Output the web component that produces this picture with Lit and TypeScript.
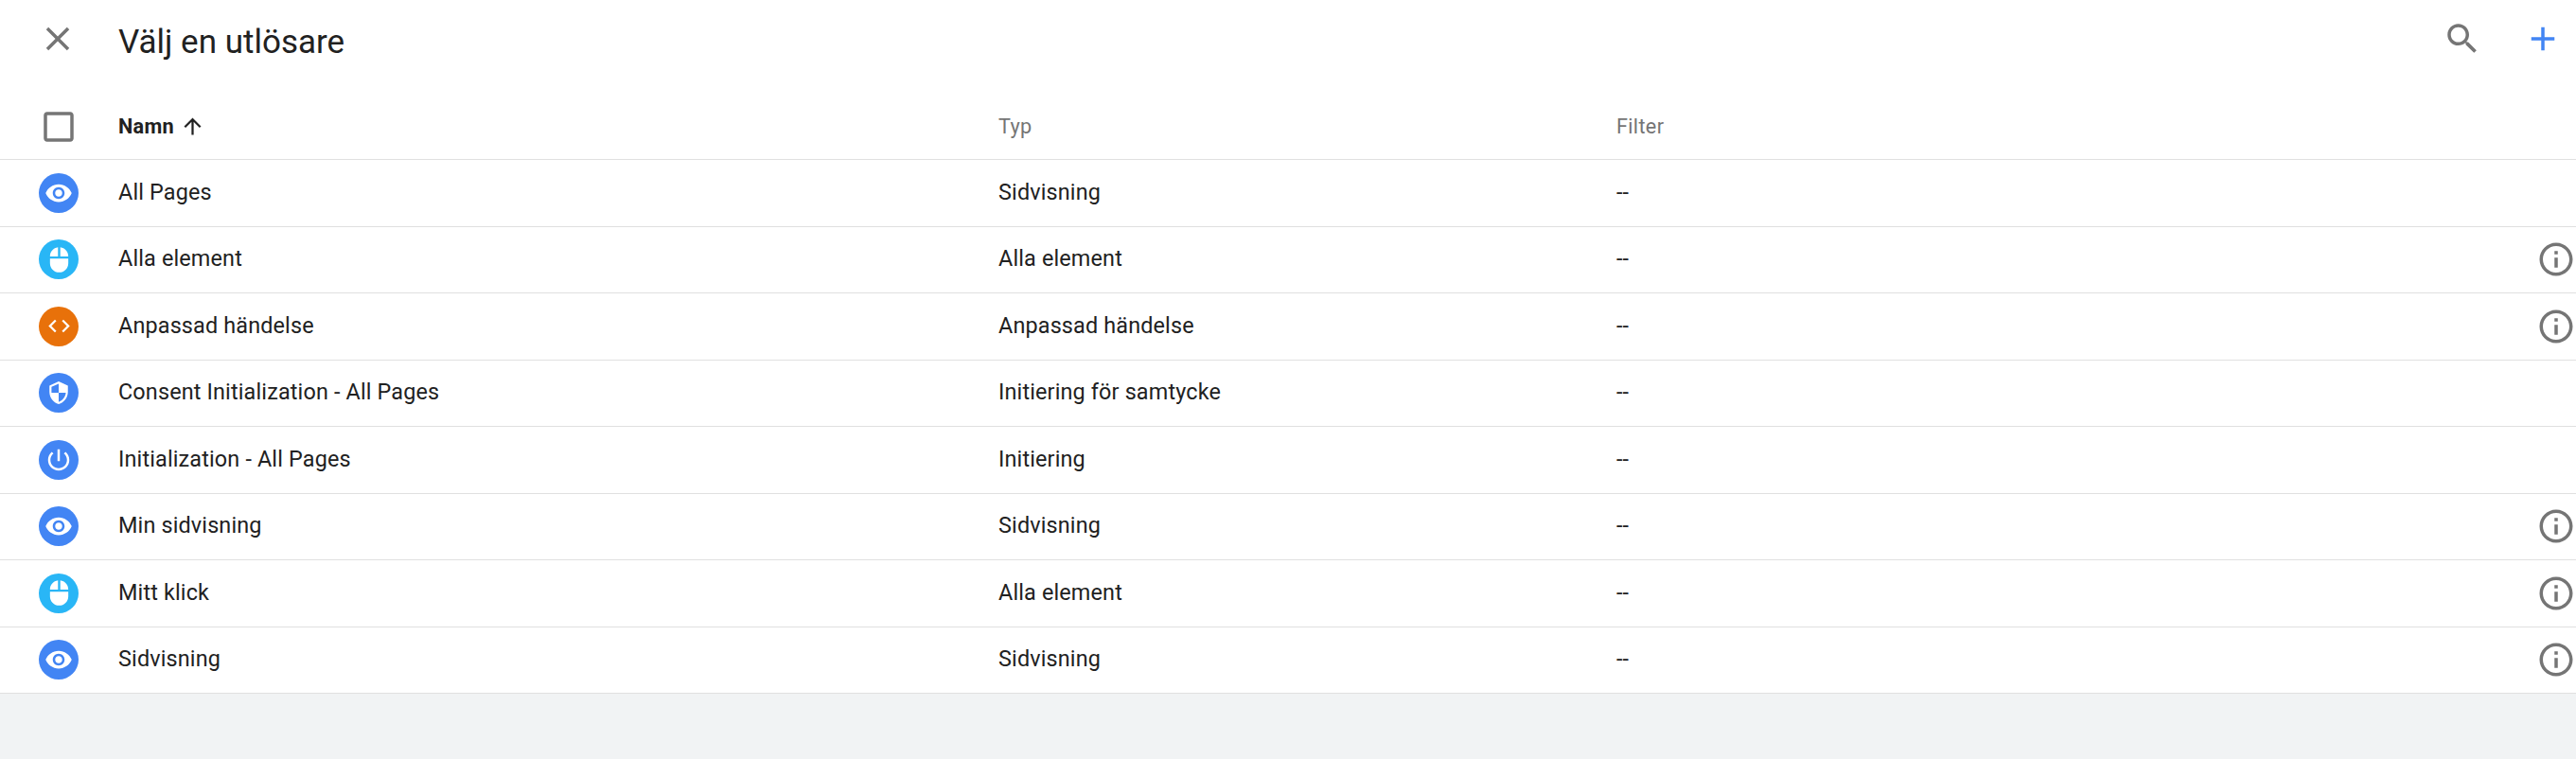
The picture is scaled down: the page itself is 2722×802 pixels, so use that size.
import { LitElement, html, css, svg } from "lit";
import { customElement } from "lit/decorators.js";

const P = {
  close: "M19 6.41L17.59 5 12 10.59 6.41 5 5 6.41 10.59 12 5 17.59 6.41 19 12 13.41 17.59 19 19 17.59 13.41 12z",
  search: "M15.5 14h-.79l-.28-.27C15.41 12.59 16 11.11 16 9.5 16 5.91 13.09 3 9.5 3S3 5.91 3 9.5 5.91 16 9.5 16c1.61 0 3.09-.59 4.23-1.57l.27.28v.79l5 4.99L20.49 19l-4.99-5zm-6 0C7.01 14 5 11.99 5 9.5S7.01 5 9.5 5 14 7.01 14 9.5 11.99 14 9.5 14z",
  plus: "M19 13h-6v6h-2v-6H5v-2h6V5h2v6h6v2z",
  box: "M19 5v14H5V5h14m0-2H5c-1.1 0-2 .9-2 2v14c0 1.1.9 2 2 2h14c1.1 0 2-.9 2-2V5c0-1.1-.9-2-2-2z",
  arrow: "M4 12l1.41 1.41L11 7.83V20h2V7.83l5.58 5.59L20 12l-8-8-8 8z",
  info: "M11 7h2v2h-2zm0 4h2v6h-2zm1-9C6.48 2 2 6.48 2 12s4.48 10 10 10 10-4.48 10-10S17.52 2 12 2zm0 18c-4.41 0-8-3.59-8-8s3.59-8 8-8 8 3.59 8 8-3.59 8-8 8z",
  eye: "M12 4.5C7 4.5 2.73 7.61 1 12c1.73 4.39 6 7.5 11 7.5s9.27-3.11 11-7.5c-1.73-4.39-6-7.5-11-7.5zM12 17c-2.76 0-5-2.24-5-5s2.24-5 5-5 5 2.24 5 5-2.24 5-5 5zm0-8c-1.66 0-3 1.34-3 3s1.34 3 3 3 3-1.34 3-3-1.34-3-3-3z",
  mouse: "M13 1.07V9h7c0-4.08-3.05-7.44-7-7.93zM4 15c0 4.42 3.58 8 8 8s8-3.58 8-8v-4H4v4zm7-13.93C7.05 1.56 4 4.92 4 9h7V1.07z",
  code: "M9.4 16.6L4.8 12l4.6-4.6L8 6l-6 6 6 6 1.4-1.4zm5.2 0l4.6-4.6-4.6-4.6L16 6l6 6-6 6-1.4-1.4z",
  shield: "M12 1L3 5v6c0 5.55 3.84 10.74 9 12 5.16-1.26 9-6.45 9-12V5l-9-4zm0 10.99h7c-.53 4.12-3.28 7.79-7 8.94V12H5V6.3l7-3.11v8.8z",
  power: "M13 3h-2v10h2V3zm4.83 2.17l-1.42 1.42C17.99 7.86 19 9.81 19 12c0 3.87-3.13 7-7 7s-7-3.13-7-7c0-2.19 1.01-4.14 2.58-5.42L6.17 5.17C4.23 6.82 3 9.26 3 12c0 4.97 4.03 9 9 9s9-4.03 9-9c0-2.74-1.23-5.18-3.17-6.83z",
};

const icon = (d: string, cls: string) =>
  html`<svg class=${cls} viewBox="0 0 24 24" fill="currentColor">${svg`<path d=${d}></path>`}</svg>`;

type Kind = "eye" | "mouse" | "code" | "shield" | "power";
const ROWS: { name: string; type: string; kind: Kind; info: boolean }[] = [
  { name: "All Pages", type: "Sidvisning", kind: "eye", info: false },
  { name: "Alla element", type: "Alla element", kind: "mouse", info: true },
  { name: "Anpassad händelse", type: "Anpassad händelse", kind: "code", info: true },
  { name: "Consent Initialization - All Pages", type: "Initiering för samtycke", kind: "shield", info: false },
  { name: "Initialization - All Pages", type: "Initiering", kind: "power", info: false },
  { name: "Min sidvisning", type: "Sidvisning", kind: "eye", info: true },
  { name: "Mitt klick", type: "Alla element", kind: "mouse", info: true },
  { name: "Sidvisning", type: "Sidvisning", kind: "eye", info: true },
];

@customElement("app-root")
export class AppRoot extends LitElement {
  static styles = css`
    :host {
      display: block;
      height: 802px;
      background: #f1f3f4;
      font-family: Roboto, "Liberation Sans", sans-serif;
      color: #212121;
      overflow: hidden;
    }
    .panel { background: #fff; }
    .bar {
      height: 90px;
      display: flex;
      align-items: center;
    }
    .close { width: 42px; height: 42px; color: #757575; margin-left: 40px; margin-right: 43px; margin-top: -8px; }
    .title {
      font-size: 35px;
      line-height: 42px;
      flex: 1;
    }
    .search { width: 42px; height: 42px; color: #757575; margin-right: 43px; margin-top: -9px; }
    .plus { width: 42px; height: 42px; color: #4285f4; margin-right: 14px; margin-top: -8px; }
    .row {
      display: grid;
      grid-template-columns: 125px 930px 653px 1fr 42px;
      align-items: center;
      box-sizing: border-box;
      height: 70.5px;
      border-bottom: 1.5px solid #e0e0e0;
      font-size: 23.4px;
      letter-spacing: 0.15px;
      line-height: 32px;
    }
    .cell { padding-bottom: 2px; }
    .head {
      height: 79px;
      padding-top: 10px;
      font-size: 21.7px;
      letter-spacing: 0.3px;
      color: #757575;
    }
    .lead { display: flex; justify-content: center; padding-right: 1px; }
    .box { width: 42px; height: 42px; color: #757575; }
    .sort { display: flex; align-items: center; gap: 6px; font-weight: 700; color: #212121; }
    .arrow { width: 27px; height: 27px; margin-top: -2px; }
    .badge {
      width: 42px;
      height: 42px;
      border-radius: 50%;
      display: flex;
      align-items: center;
      justify-content: center;
      color: #fff;
      background: #4285f4;
    }
    .badge.mouse { background: #29b6f6; }
    .badge.code { background: #e8710a; }
    .badge svg { width: 30px; height: 30px; }
    .badge.shield svg { width: 26px; height: 26px; }
    .badge.mouse svg { width: 29px; height: 29px; }
    .badge.code svg { width: 27px; height: 27px; }
    .info { width: 42px; height: 42px; color: #757575; display: block; }
  `;

  render() {
    return html`
      <div class="panel">
        <div class="bar">
          ${icon(P.close, "close")}
          <div class="title">Välj en utlösare</div>
          ${icon(P.search, "search")}
          ${icon(P.plus, "plus")}
        </div>
        <div class="row head">
          <div class="lead">${icon(P.box, "box")}</div>
          <div class="sort">Namn ${icon(P.arrow, "arrow")}</div>
          <div>Typ</div>
          <div>Filter</div>
          <div></div>
        </div>
        ${ROWS.map(
          (r) => html`
            <div class="row">
              <div class="lead"><div class="badge ${r.kind}">${icon(P[r.kind], "")}</div></div>
              <div class="cell">${r.name}</div>
              <div class="cell">${r.type}</div>
              <div class="cell">--</div>
              <div>${r.info ? icon(P.info, "info") : ""}</div>
            </div>
          `
        )}
      </div>
    `;
  }
}
